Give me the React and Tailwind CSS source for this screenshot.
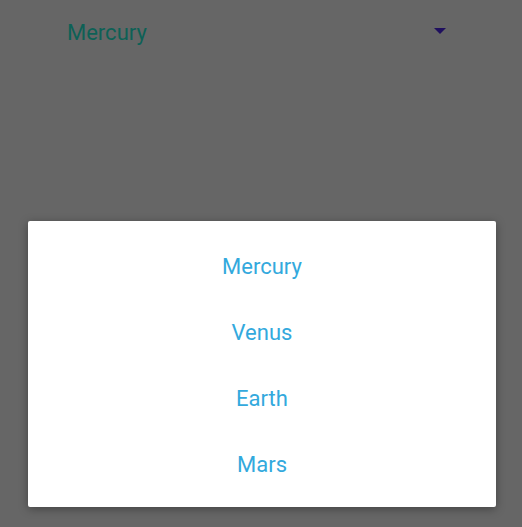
import React from 'react'

const planets = ['Mercury', 'Venus', 'Earth', 'Mars']

export default function App() {
  return (
    <div className="h-[527px] w-full bg-[#666666] overflow-hidden" style={{ fontFamily: 'Roboto, "Noto Sans", sans-serif' }}>
      <div className="flex items-center h-[66px] pl-[67px] pr-[76px]">
        <span className="text-[22px] text-[#0d6156] leading-none">Mercury</span>
        <span className="ml-auto w-0 h-0 border-l-[6px] border-r-[6px] border-t-[6px] border-l-transparent border-r-transparent border-t-[#1f0f5e] mb-[4px]"></span>
      </div>

      <div className="ml-[28px] mr-[26px] mt-[155px] h-[286px] bg-white rounded-[2px] shadow-[0_2px_10px_rgba(0,0,0,0.35)] pt-[12px] pb-[10px] flex flex-col">
        {planets.map((p) => (
          <div key={p} className="h-[66px] flex items-center justify-center text-[22px] text-[#33a9dd]">
            {p}
          </div>
        ))}
      </div>
    </div>
  )
}
